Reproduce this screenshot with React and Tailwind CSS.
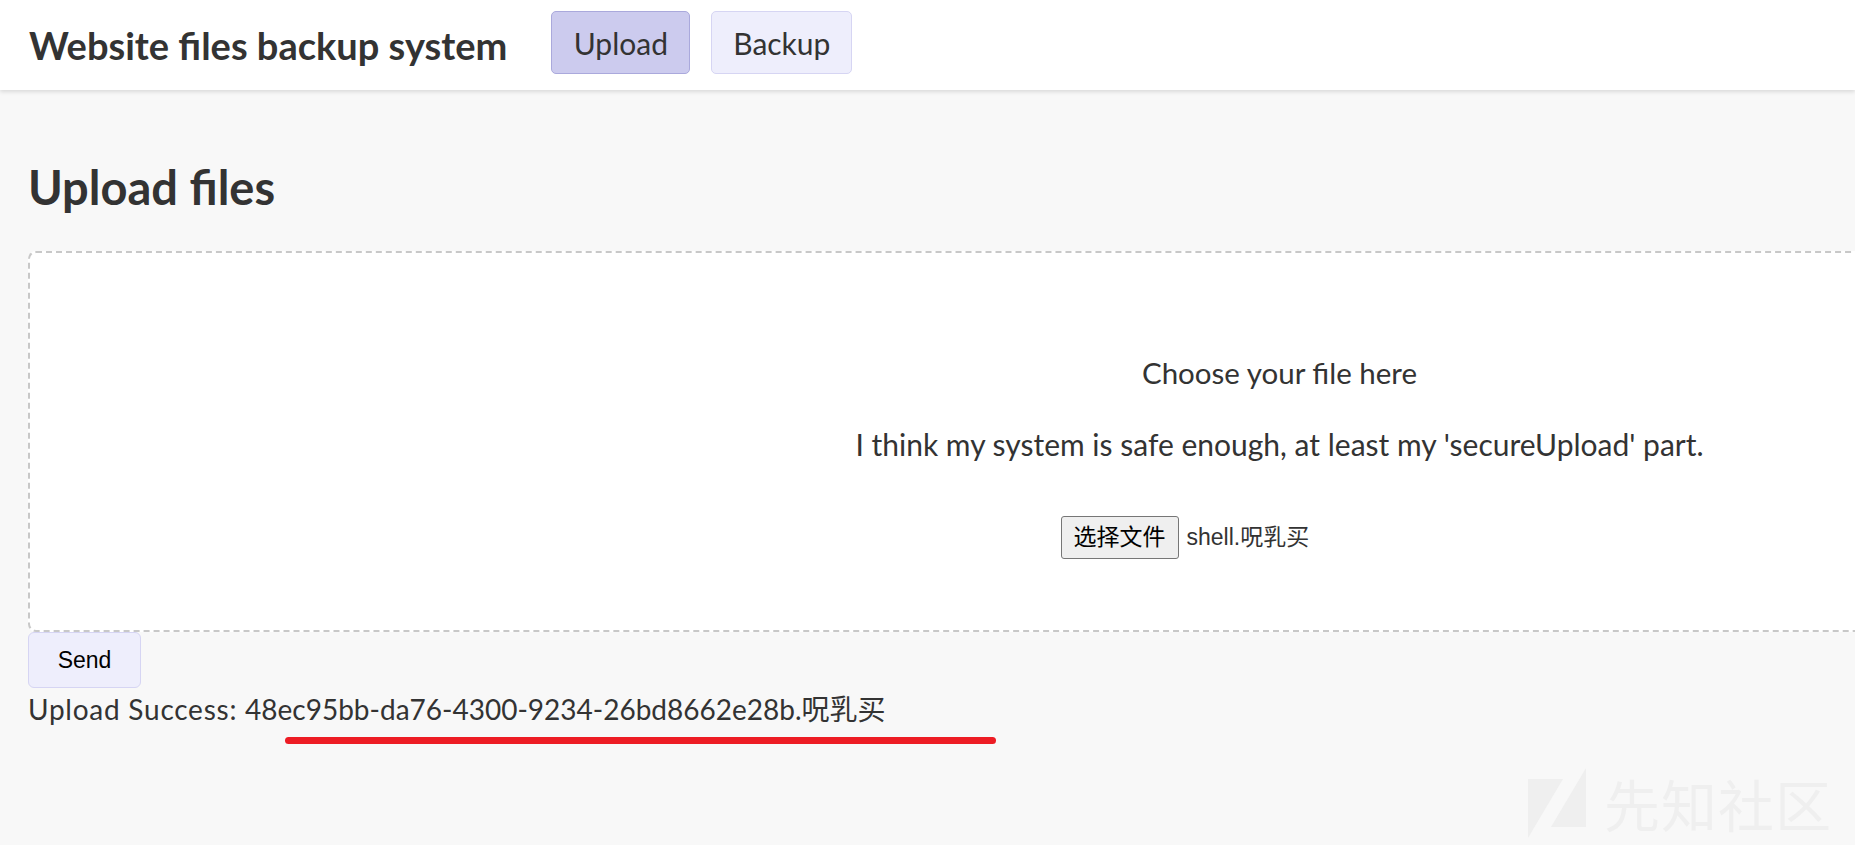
import React from "react";

export default function App() {
  const sans = { fontFamily: "Lato, 'Noto Sans CJK SC', sans-serif" };
  return (
    <div
      className="relative w-[1855px] h-[845px] overflow-hidden bg-[#f8f8f8] text-[#333]"
      style={sans}
    >
      <header className="relative z-10 h-[90px] bg-white shadow-[0_2px_4px_rgba(0,0,0,0.12)] flex items-start pt-[11px] pl-[29px]">
        <h1 className="mt-[15px] text-[38px] leading-[38px] font-bold whitespace-nowrap">
          Website files backup system
        </h1>
        <nav className="flex gap-[21px] ml-[44px]">
          <button className="h-[63px] w-[139px] rounded-[5px] border border-[#aaa9dc] bg-[#cccbee] text-[30px] leading-[30px] text-[#333]">
            Upload
          </button>
          <button className="h-[63px] w-[141px] rounded-[5px] border border-[#d6d5f3] bg-[#eeeefc] text-[30px] leading-[30px] text-[#333]">
            Backup
          </button>
        </nav>
      </header>

      <main className="pl-[28px]">
        <h2 className="mt-[74px] text-[47px] leading-[47px] font-bold whitespace-nowrap">
          Upload files
        </h2>
        <div className="mt-[40px] w-[2503px] h-[381px] rounded-lg border-2 border-dashed border-[#c8c8c8] bg-white flex flex-col items-center pt-[105px]">
          <p className="text-[29.5px] leading-[30px] whitespace-nowrap">Choose your file here</p>
          <p className="mt-[41px] text-[30px] leading-[30px] whitespace-nowrap">
            I think my system is safe enough, at least my 'secureUpload' part.
          </p>
          <div
            className="mt-[57px] w-[438px] h-[43px] flex items-center"
            style={{ fontFamily: "'Liberation Sans', 'Noto Sans CJK SC', sans-serif" }}
          >
            <span className="h-[43px] w-[118px] flex items-center justify-center rounded-[3px] border border-[#767676] bg-[#efefef] text-[23px] text-black">
              选择文件
            </span>
            <span className="ml-[8px] text-[23px] text-[#333] whitespace-nowrap">shell.呪乳买</span>
          </div>
        </div>
        <button
          className="w-[113px] h-[56px] rounded-[6px] border border-[#d6d5f3] bg-[#eeeefc] text-[23px] text-black"
          style={{ fontFamily: "'Liberation Sans', sans-serif" }}
        >
          Send
        </button>
        <p className="mt-[7px] text-[28px] leading-[28px] whitespace-nowrap">
          <span className="tracking-[0.75px]">Upload Success: </span>
          48ec95bb-da76-4300-9234-26bd8662e28b.呪乳买
        </p>
        <div className="mt-[14px] ml-[257px] w-[711px] h-[7px] rounded-full bg-[#ed1c24]" />
      </main>

      <div className="absolute left-[1528px] top-[768px] flex items-end gap-[18px] pointer-events-none">
        <svg width="58" height="70" viewBox="0 0 58 70">
          <polygon points="0,11 35,11 0,70" fill="#efefef" />
          <polygon points="58,0 58,59 23,59" fill="#efefef" />
        </svg>
        <span
          className="text-[56px] leading-[70px] text-[#efefef] tracking-[1px]"
          style={{ fontFamily: "'Noto Sans CJK SC', sans-serif" }}
        >
          先知社区
        </span>
      </div>
    </div>
  );
}
